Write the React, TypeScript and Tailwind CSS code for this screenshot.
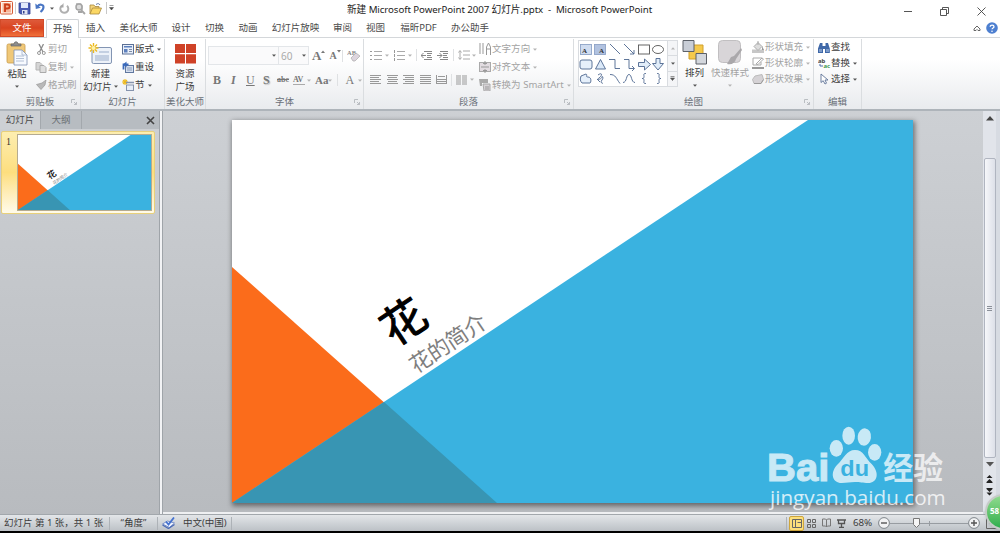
import type { ReactNode } from "react";
import clsx from "clsx";

const TABS = [
  { label: "插入", width: "w-[33px]" },
  { label: "美化大师", width: "w-[53px]" },
  { label: "设计", width: "w-[32px]" },
  { label: "切换", width: "w-[35px]" },
  { label: "动画", width: "w-[32px]" },
  { label: "幻灯片放映", width: "w-[63px]" },
  { label: "审阅", width: "w-[31px]" },
  { label: "视图", width: "w-[35px]" },
  { label: "福昕PDF", width: "w-[51px]" },
  { label: "办公助手", width: "w-[52px]" },
];

const FONT_CJK = "'Noto Sans','Noto Sans CJK SC',sans-serif";

type IconProps = { w: number; h: number; box?: string; className?: string; children: ReactNode };

function Icon({ w, h, box, className, children }: IconProps) {
  return (
    <svg
      width={w}
      height={h}
      viewBox={box ?? `0 0 ${w} ${h}`}
      fill="none"
      className={clsx("block shrink-0", className)}
    >
      {children}
    </svg>
  );
}

function Caret({ dim, className }: { dim?: boolean; className?: string }) {
  return (
    <Icon w={4} h={3} className={className}>
      <path d="M0 0.4h4L2 2.7z" fill={dim ? "#b4b4b4" : "#555"} />
    </Icon>
  );
}

function Sep() {
  return <span className="block h-[12px] w-px shrink-0 bg-[#dfe1e3]" />;
}

export default function App() {
  return (
    <div className="relative flex h-[533px] w-[1000px] flex-col overflow-hidden bg-white font-['Noto_Sans','Noto_Sans_CJK_SC',sans-serif] text-[9.5px] leading-none text-[#3c3c3c]">
      <TitleBar />
      <TabBar />
      <Ribbon />
      <div className="flex h-[403px] shrink-0">
        <SlidePanel />
        <div className="h-full w-[4px] shrink-0 border-x border-[#9fa4a9] bg-[#f2f3f5]" />
        <Editor />
        <ScrollBar />
      </div>
      <StatusBar />
      <div className="h-[2px] bg-black" />
      <Watermark />
      <div className="absolute top-[494px] left-[985px] grid h-[36px] w-[36px] place-items-center rounded-full border-2 border-[#c5cbc6] bg-linear-to-b from-[#8edb8e] to-[#2aae4c] shadow">
        <span className="-ml-[16px] -mt-[3px] w-[10px] text-[8px] font-bold text-white">58</span>
      </div>
    </div>
  );
}

function TitleBar() {
  return (
    <header className="flex h-[19px] shrink-0">
      <div className="flex w-[347px] items-center pb-[3px]">
        <Icon w={14} h={14}>
          <rect x="0.5" y="0.5" width="12" height="12.5" rx="1" fill="#fff3eb" stroke="#d55a35" />
          <rect x="2.5" y="2" width="8.5" height="9.5" fill="#f6b69a" />
          <path d="M5 11V3.5h2.2c3.3 0 3.3 4 0 4H5" stroke="#cc3b16" strokeWidth="1.8" />
        </Icon>
        <span className="ml-px h-[12px] w-px bg-[#cfcfcf]" />
        <Icon w={13} h={13} className="ml-[2px]">
          <path d="M1 1h11v11H2.5L1 10.5z" fill="#4b5cb4" stroke="#33428f" strokeWidth="0.8" />
          <path d="M3 1h7v5H3z" fill="#e3eafa" />
          <path d="M4 8h5.5v4H4z" fill="#dfe2ef" />
          <path d="M5 9h1.5v2.5H5z" fill="#35418c" />
        </Icon>
        <Icon w={11} h={12} className="ml-[4px]">
          <path d="M2.5 4.5c2-3 6-2 6 .5 0 2-1 3.500-3 5" stroke="#4a76c4" strokeWidth="2.1" />
          <path d="M0.300 1.500l0.500 5.500 5-1.200z" fill="#4a76c4" />
        </Icon>
        <Caret className="ml-[4px]" />
        <Icon w={11} h={12} className="ml-[5px]">
          <path d="M3 3.500a4 4 0 1 0 5 .3" stroke="#b0b0b0" strokeWidth="2" />
          <path d="M4.500 1v4.500H1z" fill="#a8a8a8" />
        </Icon>
        <Icon w={12} h={13} className="ml-[4px]">
          <path d="M2 1h5l2 3v4H2z" fill="#c4c4c4" />
          <circle cx="5" cy="5" r="3" fill="#ddd" stroke="#a5a5a5" strokeWidth="1.500" />
          <path d="M7 8l4 4M4 10h4" stroke="#a5a5a5" strokeWidth="1.800" />
        </Icon>
        <Icon w={13} h={13} className="ml-[3px]">
          <path d="M1 12V3h4l1 1.500h4V6" fill="#f5d57b" stroke="#a8893d" strokeWidth="0.8" />
          <path d="M1 12l2.500-6H12.500L10 12z" fill="#fbd764" stroke="#a8893d" strokeWidth="0.8" />
          <path d="M7 2.500c2-1.500 3-1 4 .5" stroke="#6179a6" />
        </Icon>
        <span className="ml-[4px] h-[12px] w-px bg-[#c8c8c8]" />
        <Icon w={5} h={6} className="ml-[2px]">
          <path d="M0.500 0.500h4M0.500 2.500h4L2.500 5z" fill="#444" stroke="#444" strokeWidth="0.5" />
        </Icon>
      </div>
      <h1 className="w-[306px] pt-[5px] text-[9.7px] tracking-[-0.08px] whitespace-pre text-[#1c1c1c]">
        新建 Microsoft PowerPoint 2007 幻灯片.pptx  -  Microsoft PowerPoint
      </h1>
      <div className="ml-auto flex items-start gap-[28px] pt-[7px] pr-[14px]">
        <Icon w={8} h={9}>
          <path d="M0 4.500h8" stroke="#555" />
        </Icon>
        <Icon w={9} h={9}>
          <path d="M0.500 2.500h6v6h-6zM2.500 2.500v-2h6v6h-2" stroke="#444" strokeWidth="0.9" />
        </Icon>
        <Icon w={9} h={9}>
          <path d="M0.500 0.500l8 8M8.500 0.500l-8 8" stroke="#444" strokeWidth="0.9" />
        </Icon>
      </div>
    </header>
  );
}

function TabBar() {
  return (
    <nav className="flex h-[19px] shrink-0 border-b border-[#d4d7da] text-[#4a4a4a]">
      <div className="grid h-[18px] w-[44px] place-items-center border border-[#d24a28] bg-linear-to-b from-[#de5a3a] via-[#d9431f] to-[#f0703a] text-white">
        文件
      </div>
      <div className="ml-[2px] grid h-[19px] w-[33px] place-items-center rounded-t-[2px] border border-b-0 border-[#d0d3d6] bg-white">
        开始
      </div>
      {TABS.map((t) => (
        <div key={t.label} className={clsx("grid h-[18px] place-items-center whitespace-nowrap", t.width)}>
          {t.label}
        </div>
      ))}
      <div className="ml-auto flex items-center gap-[5px] pr-[2px]">
        <Icon w={8} h={7}>
          <path d="M1 4l3-3 3 3v1.500H5L4 4.500 3 5.500H1z" stroke="#666" />
        </Icon>
        <Icon w={12} h={12}>
          <circle cx="6" cy="6" r="5.800" fill="#4d7fd0" />
          <path d="M4.200 4.700c0-2.200 3.800-2.200 3.800 0 0 1.300-2 1.200-2 2.600" stroke="#fff" strokeWidth="1.300" />
          <circle cx="6" cy="9.200" r="0.800" fill="#fff" />
        </Icon>
      </div>
    </nav>
  );
}

type GroupProps = { title: string; className: string; launcher?: boolean; children: ReactNode };

function Group({ title, className, launcher, children }: GroupProps) {
  return (
    <section className={clsx("flex h-full shrink-0 flex-col border-r border-[#dadde0]", className)}>
      <div className="flex h-[58px]">{children}</div>
      <div className="flex items-center">
        <span className="w-[9px]" />
        <span className="flex-1 text-center whitespace-nowrap text-[#6a7078]">{title}</span>
        <span className="w-[9px]">
          {launcher ? (
            <Icon w={6} h={6}>
              <path d="M0.500 4V0.500H4M3 3l2.500 2.500M5.500 3v2.500H3" stroke="#b4b8bc" strokeWidth="0.9" />
            </Icon>
          ) : null}
        </span>
      </div>
    </section>
  );
}

type CommandProps = { icon: ReactNode; label: string; caret?: boolean; dim?: boolean; tight?: boolean };

function Command({ icon, label, caret, dim, tight }: CommandProps) {
  return (
    <div
      className={clsx(
        "flex items-center whitespace-nowrap",
        tight ? "h-[16px]" : "h-[18px]",
        dim && "text-[#a3a3a3]",
      )}
    >
      <span className="flex w-[14px] shrink-0 justify-center">{icon}</span>
      <span>{label}</span>
      {caret ? <Caret dim={dim} className="ml-[3px]" /> : null}
    </div>
  );
}

function Ribbon() {
  return (
    <div className="flex h-[73px] shrink-0 border-b-2 border-[#aeb4ba] bg-linear-to-b from-white from-30% to-[#e9ebee] pt-[1px]">
      <ClipboardGroup />
      <SlidesGroup />
      <Group title="美化大师" className="w-[41px]">
        <div className="flex w-full flex-col items-center pt-[5px]">
          <Icon w={21} h={20}>
            <path d="M0 0h10v9H0zM11 0h10v9H11zM0 10.300h10v9.200H0zM11 10.300h10v9.200H11z" fill="#cf4227" />
          </Icon>
          <span className="mt-[5px]">资源</span>
          <span className="mt-[3px]">广场</span>
        </div>
      </Group>
      <FontGroup />
      <ParagraphGroup />
      <DrawingGroup />
      <Group title="编辑" className="w-[48px]">
        <div className="flex flex-col pl-[3px]">
          <Command
            tight
            label="查找"
            icon={
              <Icon w={12} h={11}>
                <path d="M2 1h2.500v3h3V1H10l1.800 5.500V11H7V7H5v4H0V6.500z" fill="#3f68a8" />
                <path d="M1 7h3v3H1zM8 7h3v3H8z" fill="#7d9bc9" />
              </Icon>
            }
          />
          <Command
            tight
            label="替换"
            caret
            icon={
              <Icon w={13} h={14}>
                <text x="0" y="6.500" fontSize="6" fontWeight="bold" fill="#444">ab</text>
                <text x="5.500" y="11.500" fontSize="6" fontWeight="bold" fill="#3d9a50">ac</text>
                <path d="M2 8v2h3" stroke="#4a6fad" />
              </Icon>
            }
          />
          <Command
            tight
            label="选择"
            caret
            icon={
              <Icon w={9} h={12}>
                <path d="M1 1v8.500l2.200-1.800L5 11l1.500-.8L5 7h3z" fill="#fff" stroke="#5f7396" strokeWidth="0.9" />
              </Icon>
            }
          />
        </div>
      </Group>
    </div>
  );
}

function ClipboardGroup() {
  return (
    <Group title="剪贴板" className="w-[81px]" launcher>
      <div className="flex w-[34px] flex-col items-center pt-[2px]">
        <Icon w={22} h={25}>
          <rect x="1" y="3" width="18" height="19" rx="1.500" fill="#f0c878" stroke="#c79a4b" strokeWidth="0.800" />
          <path d="M5 5V3h3c0-3 4-3 4 0h3v2z" fill="#8e8e8e" stroke="#666" strokeWidth="0.700" />
          <path d="M8 9h8l5 5v10H8z" fill="#f7faff" stroke="#7d91b3" strokeWidth="0.800" />
          <path d="M16 9v5h5M10 15h8M10 17.500h8M10 20h8" stroke="#a3b3cc" strokeWidth="0.800" />
        </Icon>
        <span className="mt-[3px]">粘贴</span>
        <Caret className="mt-[6px]" />
      </div>
      <div className="flex flex-col pt-[1px]">
        <Command
          dim
          label="剪切"
          icon={
            <Icon w={9} h={11}>
              <path d="M2 0l4 8M6.500 0l-4 8" stroke="#8d8d8d" strokeWidth="1.300" />
              <circle cx="2" cy="9" r="1.500" stroke="#999" />
              <circle cx="6.800" cy="9" r="1.500" stroke="#999" />
            </Icon>
          }
        />
        <Command
          dim
          caret
          label="复制"
          icon={
            <Icon w={12} h={11}>
              <path d="M1 0.500h4l2 2V8H1z" fill="#d5d5d5" stroke="#b5b5b5" />
              <path d="M5 3.500h4l2 2v5H5z" fill="#dedede" stroke="#aaa" />
            </Icon>
          }
        />
        <Command
          dim
          label="格式刷"
          icon={
            <Icon w={11} h={10}>
              <path d="M0.500 4.500L6 3l4-3-1 5-4 4.500z" fill="#b9b9b9" stroke="#999" strokeWidth="0.700" />
            </Icon>
          }
        />
      </div>
    </Group>
  );
}

function SlidesGroup() {
  return (
    <Group title="幻灯片" className="w-[84px]">
      <div className="flex w-[39px] shrink-0 flex-col items-center pt-[4px]">
        <Icon w={25} h={22}>
          <rect x="4" y="4.500" width="19.500" height="16" rx="1.500" fill="#edf2f9" stroke="#8395b3" />
          <path d="M11 8h10v2H11zM7 12h14v6H7z" fill="#c4d0e2" />
          <path d="M5.500 0v10M0.500 5h10M2 1.500l7 7M9 1.500l-7 7" stroke="#edba20" strokeWidth="1.400" />
          <circle cx="5.500" cy="5" r="2" fill="#fff2a8" />
        </Icon>
        <span className="mt-[4px]">新建</span>
        <span className="mt-[3px] flex items-center gap-[2px] whitespace-nowrap">
          幻灯片
          <Caret />
        </span>
      </div>
      <div className="flex flex-col pt-[1px] pl-[1px]">
        <Command
          caret
          label="版式"
          icon={
            <Icon w={12} h={11}>
              <rect x="0.500" y="0.500" width="11" height="9.500" fill="#eaf0fa" stroke="#5c7095" />
              <path d="M2 2h8v1.500H2zM2 5h3.500v3.500H2z" fill="#5d80bd" />
              <path d="M7 5.500h3M7 7.500h3" stroke="#7d8ba5" />
            </Icon>
          }
        />
        <Command
          label="重设"
          icon={
            <Icon w={12} h={12}>
              <rect x="3.500" y="4.500" width="8" height="7" fill="#d5dfef" stroke="#60779f" />
              <path d="M5 7h5M5 9h5" stroke="#8c9cb9" />
              <path d="M1.500 8.500V3.500h5" stroke="#3969bb" strokeWidth="1.800" />
              <path d="M4.500 0.500v6L1 3.500z" fill="#3969bb" />
            </Icon>
          }
        />
        <Command
          caret
          label="节"
          icon={
            <Icon w={12} h={12}>
              <path d="M0 3h6M3 0v6M1 1l4 4M5 1L1 5" stroke="#edba20" strokeWidth="1.100" />
              <path d="M4 3.500h8" stroke="#8593ad" strokeWidth="1.500" />
              <rect x="4.500" y="6" width="7" height="5.500" fill="#e7edf7" stroke="#8593ad" />
            </Icon>
          }
        />
      </div>
    </Group>
  );
}

function FontGroup() {
  return (
    <Group title="字体" className="w-[158px]" launcher>
      <div className="w-full pt-[7px] font-['Liberation_Serif',serif] text-[#777]">
        <div className="flex h-[19px] items-center pl-[2px]">
          <div className="flex h-[19px] w-[71px] items-center justify-end border border-[#e3e6e9] bg-[#fafafb] pr-[2px]">
            <Caret />
          </div>
          <div className="-ml-px flex h-[19px] w-[31px] items-center justify-between border border-[#e3e6e9] bg-[#fafafb] px-[2px] font-['Noto_Sans',sans-serif] text-[10px] text-[#aaa]">
            60
            <Caret />
          </div>
          <span className="ml-[3px] text-[13px] font-bold">A</span>
          <Icon w={4} h={3} className="-mt-[8px]">
            <path d="M0 3l2-2.500L4 3z" fill="#777" />
          </Icon>
          <span className="ml-[4px] text-[10px] font-bold">A</span>
          <Icon w={4} h={3} className="-mt-[8px]">
            <path d="M0 0h4L2 2.500z" fill="#777" />
          </Icon>
          <span className="mr-[4px] ml-auto">
            <Sep />
          </span>
          <Icon w={13} h={13} className="mr-[3px]">
            <text x="0" y="6" fontSize="7" fontWeight="bold" fill="#888" textLength="9" lengthAdjust="spacingAndGlyphs">AB</text>
            <path d="M4 9l5-5 4 3-5 5H6z" fill="#ddd5de" stroke="#aaa" strokeWidth="0.700" />
          </Icon>
        </div>
        <div className="mt-[6px] flex h-[18px] items-center pl-[7px] text-[12px]">
          <b className="w-[17px]">B</b>
          <i className="w-[16px] pl-[1px] font-bold">I</i>
          <u className="w-[17px]">U</u>
          <b className="w-[14px] [text-shadow:1px_1px_1px_#bbb]">S</b>
          <s className="w-[16px] text-[8px] font-bold">abc</s>
          <span className="w-[12px] border-b border-[#aaa] text-[8px] font-bold tracking-tight">AV</span>
          <Caret dim className="ml-[2px]" />
          <b className="ml-[4px] text-[11px]">Aa</b>
          <Caret dim />
          <span className="mx-[5px]">
            <Sep />
          </span>
          <span className="ml-[2px] text-[12px]">A</span>
          <Caret dim className="ml-[4px]" />
        </div>
      </div>
    </Group>
  );
}

function ListIcon({ numbered }: { numbered?: boolean }) {
  return (
    <Icon w={12} h={11}>
      <path d="M4 1.500h8M4 5.500h8M4 9.500h8" stroke="#aaa" />
      <path d={numbered ? "M1.500 0v3M1.500 4v3M1.500 8v3" : "M0 1.500h2M0 5.500h2M0 9.500h2"} stroke="#999" />
    </Icon>
  );
}

function IndentIcon({ flip }: { flip?: boolean }) {
  return (
    <Icon w={11} h={9}>
      <path d="M3 0.500h8M6 2.500h5M6 4.500h4M6 6.500h5M3 8.500h8" stroke="#888" />
      <path d={flip ? "M0 4.500h5M2.500 2l2.500 2.500L2.500 7" : "M5 4.500H0M2.500 2L0 4.500 2.500 7"} stroke="#888" />
    </Icon>
  );
}

function ParagraphGroup() {
  const aligns = [
    "M0 0.500h11M0 2.500h9M0 4.500h11M0 6.500h9M0 8.500h11",
    "M0 0.500h11M1 2.500h9M0 4.500h11M1 6.500h9M0 8.500h11",
    "M0 0.500h11M2 2.500h9M0 4.500h11M2 6.500h9M0 8.500h11",
    "M0 0.500h11M0 2.500h11M0 4.500h11M0 6.500h11M0 8.500h11",
    "M0.500 0v9M10.500 0v9M2 1.500h7M0 4.500h11M0 6.500h11M0 8.500h11",
  ];
  return (
    <Group title="段落" className="w-[210px]" launcher>
      <div className="w-[114px] shrink-0 pt-[7px] pl-[6px]">
        <div className="flex h-[18px] items-center">
          <ListIcon />
          <Caret dim className="ml-[3px]" />
          <span className="w-[4px]" />
          <ListIcon numbered />
          <Caret dim className="mr-[4px] ml-[3px]" />
          <Sep />
          <span className="ml-[4px] flex gap-[5px]">
            <IndentIcon />
            <IndentIcon flip />
          </span>
          <span className="mr-[4px] ml-[5px]">
            <Sep />
          </span>
          <Icon w={12} h={10}>
            <path d="M5 1h7M5 5h7M5 9h7M2 1v8M0.500 2.500L2 0.500l1.500 2M0.500 7.500L2 9.500l1.500-2" stroke="#aaa" />
          </Icon>
          <Caret dim className="ml-[2px]" />
        </div>
        <div className="mt-[6px] flex h-[19px] items-center">
          <div className="flex gap-[5.500px]">
            {aligns.map((d) => (
              <Icon key={d} w={11} h={9}>
                <path d={d} stroke="#999" />
              </Icon>
            ))}
          </div>
          <span className="mr-[4px] ml-[4px]">
            <Sep />
          </span>
          <Icon w={11} h={10}>
            <path d="M0 1h5M6 1h5M0 3h5M6 3h5M0 5h5M6 5h5M0 7h5M6 7h5M0 9h5M6 9h5" stroke="#999" />
          </Icon>
          <Caret dim className="ml-[3px]" />
        </div>
      </div>
      <div className="flex flex-col pt-[1px] tracking-[0.05px]">
        <Command
          dim
          caret
          label="文字方向"
          icon={
            <Icon w={12} h={12}>
              <path d="M1 0v11M4 0v11M7.500 12V4l2-4 2 4v8M7.500 6h4" stroke="#999" />
            </Icon>
          }
        />
        <Command
          dim
          caret
          label="对齐文本"
          icon={
            <Icon w={12} h={12}>
              <rect x="0.500" y="1.500" width="11" height="9" fill="#e2dce1" stroke="#aaa" />
              <path d="M2 6h8M6 0v4M6 12V8M4 2.500h4M4 9.500h4" stroke="#999" />
            </Icon>
          }
        />
        <Command
          dim
          caret
          label="转换为 SmartArt"
          icon={
            <Icon w={12} h={12}>
              <path d="M0 0h9v4H3v3H1z" fill="#aaa" />
              <path d="M4 5h7v7H5z" fill="#d6d2d6" stroke="#aaa" />
              <path d="M6 8h4M6 10h4" stroke="#999" />
            </Icon>
          }
        />
      </div>
    </Group>
  );
}

function ShapeGallery() {
  return (
    <div className="mt-[1px] ml-[4px] flex h-[47px] w-[100px] shrink-0 border border-[#d9dce0] bg-white">
      <Icon w={88} h={45} box="0 0 88 45">
        <g stroke="#4d668f" strokeWidth="0.9">
          <rect x="1.500" y="3.500" width="11" height="10" fill="#cfdcf0" stroke="#8ea3c6" />
          <rect x="15.500" y="3.500" width="11" height="10" fill="#b1c2e0" stroke="#8ea3c6" />
          <path d="M31 3l10 10M45 3l10 10M55 9v4h-4" />
          <rect x="59.500" y="4" width="11" height="9" stroke="#555" />
          <ellipse cx="79" cy="8.500" rx="5.500" ry="4" stroke="#555" />
          <rect x="1" y="19" width="12" height="9" rx="2" fill="#e6f0fb" />
          <path d="M21.500 18.500l5 9.500h-10z" fill="#dbe9f8" />
          <path d="M30 18.500h6v9h5M45 18.500h5v9h5M53 25l2.500 2.500L53 30" />
          <path d="M59.500 21.500h6v-3.500l6 5.500-6 5.500v-3.500h-6z" fill="#e2eefa" />
          <path d="M77 17.500h4v5h3.500L79 29l-5.500-6.500H77z" fill="#e2eefa" />
          <path d="M2 35l5-2c2 1-1 3 2 3 4 0 3 6 2 6H3c-2-2-2-4-1-7z" fill="#e6f0fb" />
          <path d="M19 34c4-3 5 0 1 3s3 1 3-1 2 1 0 3 0 4 1 3M18 38l3 3" />
          <path d="M31 33.500c6 0 6 4 10 9M44 41.500c4 0 3-8 6-8s2 8 6 8" />
          <path d="M67 32.500c-3 0-2 1-2 3s-1 2-2 2c1 0 2 0 2 2s-1 3 2 3M78 32.500c3 0 2 1 2 3s1 2 2 2c-1 0-2 0-2 2s1 3-2 3" />
        </g>
        <text x="3" y="11.500" fontSize="7" fontWeight="bold" fontFamily="Liberation Serif" fill="#333">A</text>
        <text x="20" y="11.500" fontSize="7" fontWeight="bold" fontFamily="Liberation Serif" fill="#333">A</text>
      </Icon>
      <div className="flex w-[10px] flex-col border-l border-[#d9dce0] bg-[#f4f5f7]">
        <span className="grid flex-1 place-items-center border-b border-[#d9dce0]">
          <Caret dim className="rotate-180" />
        </span>
        <span className="grid flex-1 place-items-center border-b border-[#d9dce0]">
          <Caret />
        </span>
        <span className="grid flex-1 place-items-center">
          <Icon w={5} h={5}>
            <path d="M0.500 0.500h4M0.500 2h4l-2 2.500z" fill="#555" stroke="#555" strokeWidth="0.600" />
          </Icon>
        </span>
      </div>
    </div>
  );
}

function DrawingGroup() {
  return (
    <Group title="绘图" className="w-[240px]" launcher>
      <ShapeGallery />
      <div className="flex w-[33px] flex-col items-center pt-[1px]">
        <Icon w={25} h={25}>
          <path d="M7 5h14v14H7z" fill="#f5c94c" stroke="#d1a02c" />
          <path d="M1 0.500h11v11H1z" fill="#c9ced7" stroke="#5c6169" />
          <path d="M14 13.500h10.500v10.500H14z" fill="#d3d7dd" stroke="#5c6169" />
        </Icon>
        <span className="mt-[3px]">排列</span>
        <Caret className="mt-[6px]" />
      </div>
      <div className="flex w-[38px] shrink-0 flex-col items-center pt-[1px] text-[#a3a3a3]">
        <Icon w={24} h={25}>
          <rect x="0.500" y="0.500" width="22" height="22" rx="4" fill="#d8d5d8" stroke="#c1bfc1" />
          <path d="M23 8l-7 8-3 1-4 7c5 1 8-1 9-5l6-9z" fill="#aaa8ab" />
        </Icon>
        <span className="mt-[3px] whitespace-nowrap">快速样式</span>
        <Caret dim className="mt-[6px]" />
      </div>
      <div className="flex flex-col pl-[2px]">
        <Command
          tight
          dim
          caret
          label="形状填充"
          icon={
            <Icon w={12} h={12}>
              <path d="M0 8.500h12V12H0z" fill="#c7c7c7" />
              <path d="M6 1.500l4 4-4 4-4-4zM6 0v4" fill="#ddd" stroke="#aaa" />
              <path d="M10 5l2 4h-2z" fill="#999" />
            </Icon>
          }
        />
        <Command
          tight
          dim
          caret
          label="形状轮廓"
          icon={
            <Icon w={12} h={12}>
              <path d="M10 1H1v7h8l0-3M4 7l6-6 1.500 1L6 7.500z" stroke="#aaa" />
              <path d="M0 10h12v2H0z" fill="#999" />
            </Icon>
          }
        />
        <Command
          tight
          dim
          caret
          label="形状效果"
          icon={
            <Icon w={12} h={11}>
              <path d="M3 2l7-1.500 1.500 5L9 9.500H2L0.500 5.500z" fill="#d5d2d5" stroke="#bbb" />
              <path d="M2 9.500h7l2.500-4" stroke="#999" />
            </Icon>
          }
        />
      </div>
    </Group>
  );
}

function Slide({ width, height }: { width: number; height: number }) {
  return (
    <svg
      width={width}
      height={height}
      viewBox="0 0 681 383"
      preserveAspectRatio="none"
      className="block bg-white"
      fontFamily={FONT_CJK}
    >
      <path d="M0 383V147L265 383z" fill="#fb6c1b" />
      <path d="M0 383L576 0H681V383z" fill="#3ab2e0" />
      <path d="M0 383L152 282L265 383z" fill="#3895b3" />
      <text
        transform="translate(162 227) rotate(-33.600)"
        fontSize="44"
        fill="#000"
        stroke="#000"
        strokeWidth="1"
      >
        花
      </text>
      <text transform="translate(184 254) rotate(-33.600)" fontSize="22" textLength="87" fill="#7f7f7f">花的简介</text>
    </svg>
  );
}

function SlidePanel() {
  return (
    <aside className="flex w-[159px] shrink-0 flex-col bg-linear-to-b from-[#cdd0d4] to-[#b8bbbf]">
      <div className="flex h-[18px] shrink-0 items-stretch bg-[#b7bcc1] text-[#4a4a4a]">
        <div className="grid w-[41px] place-items-center border-r border-[#a3a8ad] bg-[#cdd0d4]">幻灯片</div>
        <div className="grid w-[41px] place-items-center border-r border-[#a3a8ad] text-[#6a6e72]">大纲</div>
        <Icon w={9} h={9} className="mt-[5px] mr-[4px] ml-auto">
          <path d="M1 1l7 7M8 1L1 8" stroke="#444" strokeWidth="1.600" />
        </Icon>
      </div>
      <div className="mt-[2px] ml-[1px] flex h-[83px] w-[154px] rounded-[2px] border border-[#e8d07a] bg-linear-to-b from-[#fdeeb0] via-[#fdde7e] to-[#fffbea]">
        <span className="w-[15px] pt-[5px] pl-[4px] font-['Liberation_Serif',serif] text-[10px] text-[#333]">1</span>
        <div className="mt-[2px] h-[77px] border border-[#b5ab91] bg-white">
          <Slide width={133} height={75} />
        </div>
      </div>
    </aside>
  );
}

function Editor() {
  return (
    <main className="flex-1 border-b-2 border-[#eff0f2] bg-linear-to-b from-[#cdd0d4] to-[#b8bbbf] pt-[9px] pl-[69px]">
      <div className="h-[383px] w-[681px] shadow-[1px_2px_5px_1px_rgba(0,0,0,0.45)]">
        <Slide width={681} height={383} />
      </div>
    </main>
  );
}

function ScrollBar() {
  return (
    <div className="flex w-[17px] shrink-0 flex-col items-start bg-[#d7dbe2]">
      <div className="flex h-[400px] w-[13px] flex-col items-center bg-[#e1e4ea]">
        <Icon w={8} h={5} className="mt-[5px]">
          <path d="M4 0l4 4.500H0z" fill="#444" />
        </Icon>
        <div className="mt-[37px] grid h-[300px] w-[12px] place-items-center rounded-[2px] border border-[#b0b5c0] bg-linear-to-r from-[#f6f7fa] to-[#dde0e8]">
          <Icon w={5} h={5}>
            <path d="M0 0.500h5M0 2.500h5M0 4.500h5" stroke="#8b9099" />
          </Icon>
        </div>
        <Icon w={8} h={5} className="mt-[4px]">
          <path d="M0 0h8L4 4.500z" fill="#555" />
        </Icon>
        <Icon w={7} h={8} className="mt-[8px]">
          <path d="M3.500 0L6.500 3h-6zM3.500 4l3 3h-6zM0.500 7h6v1h-6z" fill="#222" />
        </Icon>
        <Icon w={7} h={8} className="mt-[5px]">
          <path d="M0.500 0h6v1L3.500 4 0.500 1zM0.500 4.500h6l-3 3z" fill="#222" />
        </Icon>
      </div>
    </div>
  );
}

function StatusBar() {
  return (
    <footer className="flex h-[17px] shrink-0 items-center border-t border-[#a2a7ac] bg-linear-to-b from-[#e3e6e9] to-[#bcc1c6] text-[9.5px] whitespace-nowrap text-[#3d3d3d]">
      <span className="w-[109px] pl-[4px]">幻灯片 第 1 张，共 1 张</span>
      <Divider />
      <span className="w-[47px] text-center">“角度”</span>
      <Divider />
      <Icon w={14} h={12} className="ml-[4px]">
        <path d="M0.500 7l5-3 7 2-5 4.500z" fill="#eef3ff" stroke="#7b93c8" />
        <path d="M0.500 8l6 3.500 6-4" stroke="#4a6ab5" strokeWidth="1.300" />
        <path d="M4 4.500l2.500 3L12 0.500" stroke="#4572cf" strokeWidth="1.800" />
      </Icon>
      <span className="ml-[7px] w-[48px] text-[9.5px]">中文(中国)</span>
      <Divider />
      <div className="ml-auto flex h-full items-center">
        <Divider />
        <span className="ml-[2px] grid h-[15px] w-[15px] place-items-center rounded-[2px] border border-[#cda53d] bg-[#fddf7b]">
          <Icon w={10} h={9}>
            <path d="M0.500 0.500h9v8h-9zM3.500 0.500v8M5.500 3.500h4" stroke="#666" />
          </Icon>
        </span>
        <Icon w={10} h={9} className="ml-[3px]">
          <path d="M0.500 0.500h3v3h-3zM5.500 0.500h3v3h-3zM0.500 5.500h3v3h-3zM5.500 5.500h3v3h-3z" stroke="#666" />
        </Icon>
        <Icon w={9} h={10} className="ml-[5px]">
          <path d="M0.500 1h3l1 1 1-1h3v7h-3l-1 1-1-1h-3zM4.500 2v7" stroke="#777" />
        </Icon>
        <Icon w={9} h={9} className="ml-[6px]">
          <path d="M0 1h9M1.500 1v3.500h6V1M4.500 5v3M2 8.500h5" stroke="#555" strokeWidth="1.300" />
        </Icon>
        <span className="ml-[7px] w-[20px] text-[9.800px] tracking-[-0.1px]">68%</span>
        <ZoomButton sign="M3 6h6" className="ml-[5px]" />
        <div className="flex w-[78px] items-center">
          <span className="h-px w-[23px] bg-[#979ca1]" />
          <Icon w={7} h={10}>
            <path d="M0.500 0.500h6v6l-3 3-3-3z" fill="#f5f5f5" stroke="#777" />
          </Icon>
          <span className="h-px w-[9px] bg-[#979ca1]" />
          <span className="h-[5px] w-px bg-[#979ca1]" />
          <span className="h-px flex-1 bg-[#979ca1]" />
        </div>
        <ZoomButton sign="M3 6h6M6 3v6" />
        <Icon w={12} h={12} className="mr-[2px] ml-[6px]">
          <path d="M0.500 0.500h11v11h-11zM3 6h6M6 3v6" stroke="#666" />
        </Icon>
      </div>
    </footer>
  );
}

function Divider() {
  return <span className="block h-[13px] w-px bg-[#adb2b7]" />;
}

function ZoomButton({ sign, className }: { sign: string; className?: string }) {
  return (
    <Icon w={12} h={12} className={className}>
      <circle cx="6" cy="6" r="5.400" fill="#f1f2f3" stroke="#747a80" strokeWidth="0.900" />
      <path d={sign} stroke="#555" strokeWidth="1.400" />
    </Icon>
  );
}

function Watermark() {
  return (
    <svg
      width="260"
      height="123"
      viewBox="0 0 780 369"
      className="absolute top-[410px] left-[740px]"
      fill="#fff"
      fontFamily={FONT_CJK}
    >
      <g opacity="0.72">
        <text
          x="81"
          y="213"
          fontSize="118"
          fontWeight="bold"
          fontFamily="'Liberation Sans',sans-serif"
          textLength="187"
          lengthAdjust="spacingAndGlyphs"
          stroke="#fff"
          strokeWidth="3"
        >
          Bai
        </text>
        <ellipse cx="289" cy="115" rx="20" ry="25" />
        <ellipse cx="326" cy="77" rx="19" ry="27" />
        <ellipse cx="373" cy="81" rx="20" ry="26" transform="rotate(8 373 81)" />
        <ellipse cx="404" cy="127" rx="20" ry="25" />
        <path d="M345 120c26 0 30 24 50 42 26 28 16 57-10 57-18 0-24-3-40-3s-24 3-40 3c-28 0-36-30-14-54 22-20 28-45 54-45z" />
        <text x="430" y="206" fontSize="91" fontWeight="bold" textLength="179" lengthAdjust="spacingAndGlyphs">经验</text>
      </g>
      <text
        x="90"
        y="286"
        fontSize="60"
        fontFamily="'Open Sans','Noto Sans',sans-serif"
        textLength="527"
        lengthAdjust="spacingAndGlyphs"
        opacity="0.78"
      >
        jingyan.baidu.com
      </text>
      <text
        x="301"
        y="199"
        fontSize="66"
        fontWeight="bold"
        fontFamily="'Liberation Sans',sans-serif"
        fill="#3ab2e0"
        textLength="86"
        lengthAdjust="spacingAndGlyphs"
      >
        du
      </text>
    </svg>
  );
}
